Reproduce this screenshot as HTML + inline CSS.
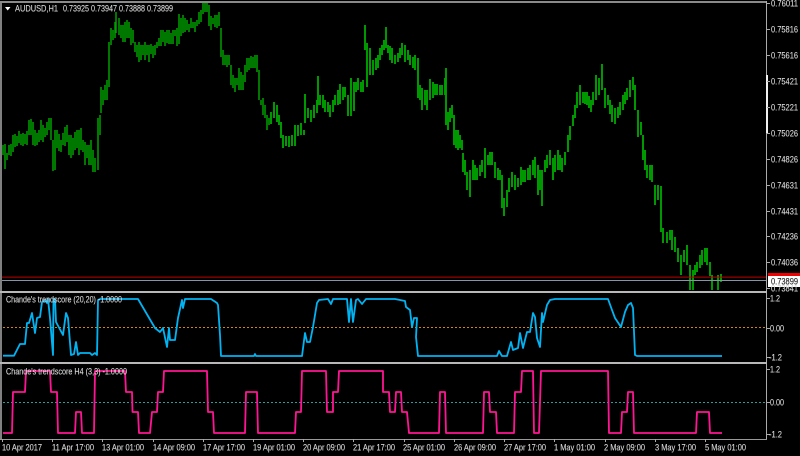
<!DOCTYPE html>
<html><head><meta charset="utf-8"><title>AUDUSD,H1</title>
<style>
html,body{margin:0;padding:0;background:#000;width:800px;height:456px;overflow:hidden}
svg{display:block}
text{font-family:"Liberation Sans",sans-serif;font-size:9.4px;fill:#d8d8d8;stroke:#d8d8d8;stroke-width:.12px}
</style></head><body>
<svg width="800" height="456" viewBox="0 0 800 456" xmlns="http://www.w3.org/2000/svg">
<rect width="800" height="456" fill="#000"/>
<!-- candles -->
<path fill="none" stroke="#00a000" stroke-width="1.5" d="M3 145V155M5 144V169M7 153V160M9 145V155M11 144V156M13 135V152M15 134V147M17 136V146M19 131V143M21 134V145M23 133V146M25 134V144M27 131V145M29 120V135M31 119V135M33 122V145M35 130V146M37 133V145M39 130V142M41 120V140M43 125V142M45 128V137M47 122V135M49 118V130M51 118V140M53 140V171M55 130V170M57 130V148M59 134V151M61 140V152M63 133V145M65 127V146M67 125V142M69 135V155M71 135V158M73 138V155M75 132V150M77 130V148M79 130V155M81 128V150M83 140V152M85 142V165M87 145V158M89 145V165M91 140V165M93 150V172M95 158V172M98 118V170M100 115V135M101 87V113M103 90V105M105 85V100M107 80V100M109 42V87M111 28V45M113 30V40M115 22V38M116 12V33M119 18V35M121 25V38M123 25V42M125 22V42M127 20V38M129 22V38M131 28V45M133 30V43M135 42V52M137 45V57M139 42V62M141 45V60M143 45V55M145 42V60M147 45V55M149 45V62M151 44V54M153 46V58M155 45V55M157 42V48M159 38V46M161 30V46M163 30V42M165 32V46M167 30V43M169 30V44M171 33V44M173 30V44M175 30V36M177 28V46M179 14V44M181 18V36M183 15V33M185 18V32M187 20V30M189 24V32M191 18V28M193 22V28M195 22V32M197 20V26M199 12V24M201 10V22M203 2V14M205 2V12M207 3V12M209 5V26M211 16V30M213 18V24M215 15V27M217 15V28M219 12V26M221 28V57M223 50V65M225 55V65M227 55V67M229 55V65M231 65V85M233 75V88M235 78V92M237 78V85M239 68V90M241 72V90M243 75V90M245 65V82M247 58V72M249 58V70M251 56V68M253 57V68M255 55V68M257 55V72M259 70V100M261 100V105M263 98V115M265 105V118M267 115V130M269 118V125"/>
<path fill="none" stroke="#00a000" stroke-width="1.9" d="M271 112V124M274 102V118M277 105V122M279 115V125M281 122V138M283 135V148M286 136V146M289 136V147M292 135V146M295 125V146M298 125V136M301 123V135M304 130V135M305 94V123M308 108V118M311 110V122M314 105V118M317 100V113M318 76V105M320 95V105M323 95V108M325 100V112M328 102V112M330 105V117M333 100V112M335 95V105M338 90V105M340 84V104M343 87V100M345 87V97M348 95V116M351 78V116M354 82V111M356 82V92M358 78V90M361 82V92M363 80V92M365 25V50M367 43V87M370 48V75M373 60V75M376 58V70M378 55V68M380 48V60M382 45V55M384 40V50M386 27V48M388 45V53M390 46V60M392 48V63M395 55V64M398 53V62M400 48V58M402 43V55M405 45V62M408 50V60M410 55V65M413 57V68M415 55V70M418 58V98M420 85V100M422 88V110M425 90V105M427 90V110M430 79V100M433 82V98M435 84V95M437 84V95M440 85V95M442 85V95M445 78V95M446 68V125M448 112V130M450 108V122M452 105V118M454 115V145M456 130V148M458 130V150M460 135V148M462 140V150M463 153V172M465 160V175M467 172V190M470 170V197M473 160V180M475 165V180M477 168V180M480 165V176M482 160V172M485 148V178M488 155V165M490 152V165M492 152V165M495 162V178M498 168V180M500 170V180M502 175V208M504 198V216M507 190V207M509 178V192M512 172V187M515 175V190M518 178V187M521 167V185M523 170V182M525 170V182M528 168V180M530 165V180M533 160V175M535 157V178M538 165V195M540 170V190M542 170V206M545 160V172M547 155V168M550 150V165M553 158V180M555 155V172M558 150V170M560 155V170M562 158V172M565 152V165M568 135V152M570 126V140M573 115V126M575 105V118M577 92V108M580 85V105M583 92V103M585 92V104M587 92V105M589 96V108M591 100V112M593 92V105M596 75V100M599 78V95M602 64V90M605 88V108M608 95V105M610 100V114M612 105V122M615 108V124M618 107V118M620 102V115M623 95V110M625 92V104M627 88V100M630 80V97M633 77V90M635 85V110M638 110V137M641 122V135M643 135V160M645 150V170M647 165V178M650 165V180M652 165V182M655 185V205M658 185V200M661 186V232M663 228V243M667 232V243M670 230V240M672 230V250M675 237V252M678 248V262M681 255V275M684 250V262M687 245V265M690 265V290M693 270V290M695 265V275M697 262V272M700 255V268M702 250V265M705 248V262M707 248V265M710 262V276M712 275V290M718 275V290M721 274V282"/>
<!-- price lines -->
<rect x="2" y="276.6" width="764" height="1" fill="#c00000"/>
<rect x="2" y="280" width="764" height="1" fill="#8595a5"/>
<!-- frame -->
<rect x="0" y="1" width="2" height="438" fill="#808080"/>
<rect x="0" y="1" width="767" height="2" fill="#8a8a8a"/>
<rect x="766" y="1" width="1" height="438" fill="#aaa"/>
<rect x="766" y="75" width="2" height="58" fill="#f0f0f0"/>
<rect x="0" y="291" width="767" height="2" fill="#b8b8b8"/>
<rect x="0" y="362" width="767" height="2" fill="#b8b8b8"/>
<rect x="0" y="439" width="767" height="1" fill="#999"/>
<!-- header -->
<path d="M5 7H10.5L7.7 10.5Z" fill="#fff"/>
<text x="15" y="11.5" textLength="43" lengthAdjust="spacingAndGlyphs">AUDUSD,H1</text>
<text x="63" y="11.5" textLength="110" lengthAdjust="spacingAndGlyphs">0.73925 0.73947 0.73888 0.73899</text>
<!-- right axis ticks -->
<path stroke="#aaa" stroke-width="1" fill="none" d="M767 3.5h3M767 29.5h3M767 55.5h3M767 81.5h3M767 107.5h3M767 133.5h3M767 159.5h3M767 185.5h3M767 211.5h3M767 236.5h3M767 262.5h3M767 288.5h3M767 298.5h3M767 328.5h3M767 357.5h3M767 369.5h3M767 402.5h3M767 434.5h3"/>
<g>
<text x="771" y="6.5" textLength="27" lengthAdjust="spacingAndGlyphs">0.76011</text>
<text x="771" y="32.5" textLength="27" lengthAdjust="spacingAndGlyphs">0.75816</text>
<text x="771" y="58.5" textLength="27" lengthAdjust="spacingAndGlyphs">0.75616</text>
<text x="771" y="84.5" textLength="27" lengthAdjust="spacingAndGlyphs">0.75421</text>
<text x="771" y="110.5" textLength="27" lengthAdjust="spacingAndGlyphs">0.75221</text>
<text x="771" y="136.5" textLength="27" lengthAdjust="spacingAndGlyphs">0.75026</text>
<text x="771" y="162.5" textLength="27" lengthAdjust="spacingAndGlyphs">0.74826</text>
<text x="771" y="188.5" textLength="27" lengthAdjust="spacingAndGlyphs">0.74631</text>
<text x="771" y="214.5" textLength="27" lengthAdjust="spacingAndGlyphs">0.74431</text>
<text x="771" y="239.5" textLength="27" lengthAdjust="spacingAndGlyphs">0.74236</text>
<text x="771" y="265.5" textLength="27" lengthAdjust="spacingAndGlyphs">0.74036</text>
</g>
<rect x="768" y="273" width="32" height="4" fill="#f00000"/>
<rect x="768" y="276" width="32" height="11" fill="#fff"/>
<text x="771" y="284.5" textLength="27" lengthAdjust="spacingAndGlyphs" style="fill:#222;stroke:#222">0.73899</text>
<text x="771" y="291.5" textLength="27" lengthAdjust="spacingAndGlyphs">0.73841</text>
<!-- sub 1 -->
<path stroke="#d08800" stroke-width="1" stroke-dasharray="2 2" fill="none" d="M3 327.5H766"/>
<path stroke="#00b4f4" stroke-width="1.8" fill="none" stroke-linejoin="round" d="M3 355.7L14 355.7L20 344L25 344L27 323L29 323L32 313L35 333L37 318L40 317L42 302L45 300L47 303L48 299L50 318L53 355L53.5 299L55 299L56 322L63 335L66 313L68 318L71 355L74 354L76 342L78 355L80 353L90 353L92 355L95 353L97 355L98 300L100 299L138 299L155 328L160 332L163 328L167 347L169 328L170 340L175 340L178 318L182 300L183 308L185 299L211 299L217 303L218 305L220 335L221 356L254 356L255 354L256 356L302 356L305 333L307 342L310 342L313 327L317 303L319 300L328 299L331 304L333 299L347 299L349 322L351 299L353 322L356 300L358 299L362 304L366 299L395 299L405 301L406 307L410 310L412 327L414 318L417 318L416 337L418 356L497 356L499 351L502 356L507 356L511 342L513 350L518 348L520 333L523 348L527 332L530 332L533 313L535 317L537 338L540 347L542 313L543 322L547 305L550 300L555 299L608 299L612 310L615 318L621 327L625 312L628 305L631 303L633 308L635 355L637 356L722 356"/>
<text x="6" y="302.5" textLength="116" lengthAdjust="spacingAndGlyphs">Chande's trendscore (20,20) -1.0000</text>
<text x="770" y="301.5" textLength="10" lengthAdjust="spacingAndGlyphs">1.2</text>
<text x="770" y="331.5" textLength="14" lengthAdjust="spacingAndGlyphs">0.00</text>
<text x="769" y="360.5" textLength="13" lengthAdjust="spacingAndGlyphs">-1.2</text>
<!-- sub 2 -->
<path stroke="#24a0a0" stroke-width="1" stroke-dasharray="2 2" fill="none" d="M3 402.5H766"/>
<path stroke="#ff1493" stroke-width="1.8" fill="none" stroke-linejoin="round" d="M3 433H12L13 392H25L26 371H50L51 392H57L58 433H75L76 412H81L82 433H94L95 371H125L126 392H132L132.5 412H138L139 433H150L152 412H157L158 392H163L164 371H207L208 412H213L214 433H245L246 392H257L258 433H295L296 412H301L302 371H326L327 412H333L333 392H338L339 371H383L383 392H389L390 412H395L396 392H401L402 412H407L409 433H439L440 392H445L446 433H483L484 392H489L490 412H496L497 433H514L515 392H521L522 371H533L534 433H539L541 371H608L609 433H621L622 412H627L628 392H633L634 433H696L697 412H709L710 433H722"/>
<text x="6" y="374.5" textLength="121" lengthAdjust="spacingAndGlyphs">Chande's trendscore H4 (3,3) -1.0000</text>
<text x="770" y="372.5" textLength="10" lengthAdjust="spacingAndGlyphs">1.2</text>
<text x="770" y="405.5" textLength="14" lengthAdjust="spacingAndGlyphs">0.00</text>
<text x="769" y="437.5" textLength="13" lengthAdjust="spacingAndGlyphs">-1.2</text>
<!-- time axis -->
<path stroke="#aaa" stroke-width="1" fill="none" d="M2.5 439v3M52.5 439v3M102.5 439v3M153.5 439v3M203.5 439v3M253.5 439v3M303.5 439v3M353.5 439v3M404.5 439v3M454.5 439v3M504.5 439v3M554.5 439v3M605.5 439v3M655.5 439v3M705.5 439v3"/>
<text x="2" y="450.5" textLength="40" lengthAdjust="spacingAndGlyphs">10 Apr 2017</text>
<text x="52" y="450.5" textLength="42" lengthAdjust="spacingAndGlyphs">11 Apr 17:00</text>
<text x="102" y="450.5" textLength="42" lengthAdjust="spacingAndGlyphs">13 Apr 01:00</text>
<text x="153" y="450.5" textLength="42" lengthAdjust="spacingAndGlyphs">14 Apr 09:00</text>
<text x="203" y="450.5" textLength="42" lengthAdjust="spacingAndGlyphs">17 Apr 17:00</text>
<text x="253" y="450.5" textLength="42" lengthAdjust="spacingAndGlyphs">19 Apr 01:00</text>
<text x="303" y="450.5" textLength="42" lengthAdjust="spacingAndGlyphs">20 Apr 09:00</text>
<text x="353" y="450.5" textLength="42" lengthAdjust="spacingAndGlyphs">21 Apr 17:00</text>
<text x="403" y="450.5" textLength="42" lengthAdjust="spacingAndGlyphs">25 Apr 01:00</text>
<text x="454" y="450.5" textLength="42" lengthAdjust="spacingAndGlyphs">26 Apr 09:00</text>
<text x="504" y="450.5" textLength="42" lengthAdjust="spacingAndGlyphs">27 Apr 17:00</text>
<text x="554" y="450.5" textLength="41" lengthAdjust="spacingAndGlyphs">1 May 01:00</text>
<text x="604" y="450.5" textLength="41" lengthAdjust="spacingAndGlyphs">2 May 09:00</text>
<text x="655" y="450.5" textLength="41" lengthAdjust="spacingAndGlyphs">3 May 17:00</text>
<text x="705" y="450.5" textLength="41" lengthAdjust="spacingAndGlyphs">5 May 01:00</text>
</svg>
</body></html>
